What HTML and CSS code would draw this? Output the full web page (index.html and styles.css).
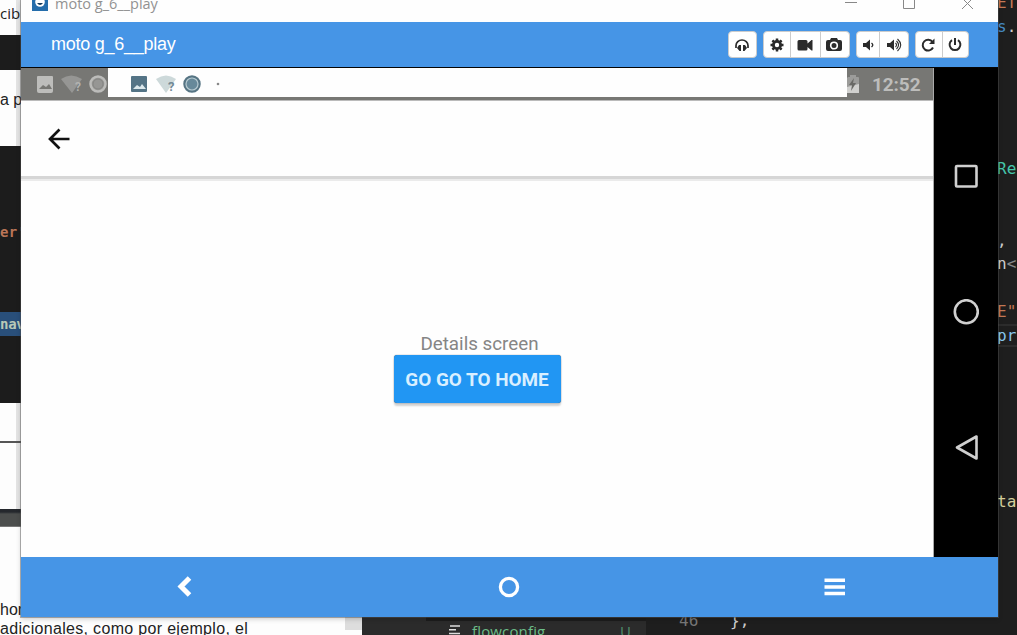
FILE: index.html
```html
<!DOCTYPE html>
<html lang="en">
<head>
<meta charset="utf-8">
<title>moto g_6__play</title>
<link rel="stylesheet" href="styles.css">
</head>
<body>
<div class="desktop">
  <div class="document">
    <div class="doc-row intro">cib</div>
    <div class="doc-code strip"></div>
    <div class="doc-row para">a p</div>
    <div class="doc-code block"><span class="code-str">er'</span><span class="code-sel">nav</span></div>
    <div class="doc-row gap-one"></div>
    <div class="doc-row gap-two"></div>
    <div class="picture-strip"></div>
    <div class="doc-row ending"><p>hor</p><p class="last-line">adicionales, como por ejemplo, el</p></div>
  </div>
  <div class="explorer">
    <div class="tree">
      <svg class="file-icon" viewBox="0 0 12 12"><path d="M1 2h10M0 5.7h7M0 9.5h11" stroke="#ddd" stroke-width="1.4"/></svg>
      <span class="file-name">flowconfig</span><span class="git-state">U</span>
    </div>
  </div>
  <div class="editor">
    <div class="line orange">ET</div>
    <div class="line"><span class="blue">s</span>.</div>
    <div class="line"></div><div class="line"></div><div class="line"></div><div class="line"></div><div class="line"></div>
    <div class="line teal">Re</div>
    <div class="line"></div><div class="line"></div>
    <div class="line">,</div>
    <div class="line">n<span class="muted">&lt;</span></div>
    <div class="line"></div>
    <div class="line orange">E"</div>
    <div class="line current">pr</div>
    <div class="line"></div><div class="line"></div><div class="line"></div><div class="line"></div><div class="line"></div><div class="line"></div>
    <div class="line yellow">ta</div>
    <div class="line"></div><div class="line"></div><div class="line"></div><div class="line"></div>
    <div class="line numbered"><span class="line-number">46</span><span>},</span></div>
  </div>

  <main class="window">
    <header class="titlebar">
      <svg class="app-icon" viewBox="0 0 16 12"><path fill="#256dab" d="M0 0h16v11H0z"/><circle cx="8" cy="2" r="4.8" fill="#fff"/><path fill="#163b5c" d="M5 3h6q-3 4-6 0z"/></svg>
      <span class="window-name">moto g_6__play</span>
      <svg class="window-controls" viewBox="0 0 132 12" fill="none" stroke="#888" stroke-width="1"><path d="M0 2.5h12M58.500-2h11v10.500h-11zM117-2l11 11M128-2l-11 11"/></svg>
    </header>
    <div class="toolbar">
      <h1 class="device-name">moto g_6__play</h1>
      <div class="actions">
        <div class="group audio"><button class="tool"><svg viewBox="0 0 16 16"><path d="M2 11V8.500a6 5.500 0 0 1 12 0V11" fill="none" stroke="#2b2b2b" stroke-width="1.700"/><path d="M5 8h2v6H5.500L3 11zM9 8h2l2 3-2.500 3H9z" fill="#2b2b2b"/></svg></button></div>
        <div class="group capture">
          <button class="tool"><svg viewBox="0 0 16 16"><circle cx="8" cy="8" r="3.600" fill="none" stroke="#2b2b2b" stroke-width="2.800"/><path d="M8 1.500v3M8 11.500v3M1.500 8h3M11.500 8h3M3.400 3.400l2 2M10.600 10.600l2 2M12.600 3.400l-2 2M5.400 10.600l-2 2" stroke="#2b2b2b" stroke-width="2.500"/></svg></button>
          <button class="tool"><svg viewBox="0 0 16 16"><path d="M2 3h7q1.500 0 1.500 1.500v2L14.500 3H15.500v10.500h-1L10.500 10v2q0 1.500-1.500 1.500H2Q.5 13.500.5 12V4.500Q.5 3 2 3z" fill="#2b2b2b"/></svg></button>
          <button class="tool"><svg viewBox="0 0 16 16"><path d="M0 5q0-2 2-2h2l1-2h6l1 2h2q2 0 2 2v7q0 2-2 2H2q-2 0-2-2z" fill="#2b2b2b"/><circle cx="8" cy="8.500" r="3.300" fill="none" stroke="#fff" stroke-width="1.600"/></svg></button>
        </div>
        <div class="group volume">
          <button class="tool"><svg viewBox="0 0 16 16"><path d="M3 6h3l4-3.500v11L6 10H3z" fill="#2b2b2b"/><path d="M11.500 6q2.500 2 0 4" fill="none" stroke="#2b2b2b" stroke-width="1.400"/></svg></button>
          <button class="tool"><svg viewBox="0 0 16 16"><path d="M1 6h3l4-3.500v11L4 10H1z" fill="#2b2b2b"/><path d="M9.500 6q2 2 0 4M10.500 4q4 4 0 8M11.500 2q6.500 6 0 12" fill="none" stroke="#2b2b2b" stroke-width="1.100"/></svg></button>
        </div>
        <div class="group power">
          <button class="tool"><svg viewBox="0 0 16 16"><path d="M12.500 5A5.400 5.400 0 1 0 13 10.500" fill="none" stroke="#2b2b2b" stroke-width="2"/><path d="M14.500 1.500v5.500H9z" fill="#2b2b2b"/></svg></button>
          <button class="tool"><svg viewBox="0 0 16 16"><path d="M5 3.200a5.400 5.400 0 1 0 6 0M8 1v7" fill="none" stroke="#2b2b2b" stroke-width="2"/></svg></button>
        </div>
      </div>
    </div>
    <div class="phone">
      <div class="screen">
        <div class="statusbar">
          <svg class="notices dim" viewBox="0 0 87 32"><path fill="#bdbdbb" d="M17 8h14q1 0 1 1v14q0 2-2 2H18q-2 0-2-2V9q0-1 1-1z"/><path fill="#777773" d="M18 21l4-4 3 2 3-3 3 5z"/><path fill="#969694" d="M40 11q10-7 21 0L51 25z"/><circle cx="77" cy="16" r="7.500" fill="#969694" stroke="#bcbcba" stroke-width="2.500"/><circle cx="77" cy="16" r="5" fill="none" stroke="#858583" stroke-width="1"/><text x="54" y="23" font-family="Roboto" font-size="12" font-weight="700" fill="#b2b2b0">?</text></svg>
          <div class="notification">
            <svg class="notices" viewBox="0 0 120 29"><path fill="#547486" d="M24 8h14q1 0 1 1v14q0 1-1 1H24q-1 0-1-1V9q0-1 1-1z"/><path fill="#dbe8ec" d="M25 21l4-4 3 2 2-3 4 5z"/><path fill="#cdd9da" d="M48 11q10-7 20 0L58 25z"/><text x="60" y="22.500" font-family="Roboto" font-size="13" font-weight="700" fill="#728995">?</text><circle cx="84" cy="16" r="7.600" fill="#67899a" stroke="#567483" stroke-width="2.300"/><circle cx="84" cy="16" r="6" fill="none" stroke="#b6c9d0" stroke-width="1.200"/><circle cx="110" cy="16" r="1.300" fill="#888"/></svg>
          </div>
          <svg class="battery" viewBox="0 0 13 32"><path fill="#9c9c9a" d="M1 9h2V7h6v2h2q1 0 1 1v15H0V10z"/><path fill="#d0d0ce" d="M0 19l12-3v9H0z"/><path fill="#696966" d="M7 10l-5 7h3l-1 6 5-8H6z"/></svg>
          <span class="clock">12:52</span>
        </div>
        <div class="appbar"><svg class="back-arrow" viewBox="0 0 24 24"><path d="M22.500 12H3M12.500 2.500L3 12l9.500 9.500" fill="none" stroke="#111" stroke-width="2.700"/></svg></div>
        <div class="details">
          <p class="screen-name">Details screen</p>
          <button class="home-button">GO GO TO HOME</button>
        </div>
      </div>
      <nav class="softkeys">
        <svg viewBox="0 0 26 26"><rect x="3" y="3" width="20.500" height="20.500" rx="1"/></svg>
        <svg viewBox="0 0 26 26"><circle cx="13.300" cy="12.700" r="11.500"/></svg>
        <svg viewBox="0 0 26 26"><path d="M23.500 1.500v22L4 12.500z" stroke-linejoin="round"/></svg>
      </nav>
    </div>
    <nav class="bottom-nav">
      <svg viewBox="0 0 24 24"><path d="M17.500 3L9 11.500l8.500 8.500" fill="none" stroke="#fff" stroke-width="5"/></svg>
      <svg viewBox="0 0 24 24"><circle cx="12" cy="12" r="8.600" fill="none" stroke="#fff" stroke-width="3.300"/></svg>
      <svg viewBox="0 0 24 24"><path d="M1.500 5.200h20.500M1.500 12h20.500M1.500 18.500h20.500" stroke="#fff" stroke-width="3.400"/></svg>
    </nav>
  </main>
</div>
</body>
</html>
```
FILE: styles.css
```css
* { box-sizing: border-box; }
body { margin: 0; }
p, h1 { margin: 0; }
svg { display: block; flex: none; }
button { margin: 0; border: 0; padding: 0; background: none; }
.desktop { position: relative; display: flex; width: 1017px; height: 635px; overflow: hidden; background: #1e1e1e; font-family: "Liberation Sans", Arial, sans-serif; }

.document { display: flex; flex-direction: column; width: 362px; flex: none; background: #fdfdfd; color: #222; }
.doc-row { flex: none; white-space: nowrap; background: linear-gradient(90deg, #fdfdfd 16px, #e4e4e4 16px); }
.intro { height: 35px; padding-top: 3px; font: 15px/20px "Open Sans", sans-serif; }
.doc-code { flex: none; background: #1c1c1c; }
.strip { height: 35px; }
.para { height: 76px; padding-top: 20px; font-size: 16px; line-height: 20px; }
.block { display: flex; flex-direction: column; height: 257px; padding-top: 76px; font: bold 14px/20px "DejaVu Sans Mono", monospace; letter-spacing: -.3px; }
.code-str { color: #b97557; letter-spacing: .3px; }
.code-sel { height: 24px; margin-top: 70px; line-height: 25px; color: #b9c9b7; background: #294f7a; }
.gap-one { height: 40px; border-bottom: 2px solid #555; }
.gap-two { height: 66px; }
.picture-strip { height: 18px; flex: none; background: linear-gradient(#25282d 3px, #4c4e4d 5px); border-bottom: 1px solid #777; }
.ending { height: 108px; padding-top: 73px; font-size: 16px; line-height: 19px; background: linear-gradient(90deg, transparent 345px, #ddd 345px) 0 0 / 100% 103px no-repeat, #fdfdfd; }
.last-line { letter-spacing: .32px; }

.explorer { width: 284px; flex: none; padding: 621px 0 0 64px; background: linear-gradient(90deg, #2b2b2b 64px, #1c1c1c 64px); }
.tree { display: flex; align-items: flex-start; width: 220px; height: 14px; padding-left: 23px; background: #2b2b2b; color: #6bbd88; font: 15px/20px "Open Sans", sans-serif; }
.file-icon { width: 12px; height: 12px; margin: 3px 11px 0 0; }
.file-name { flex: 1; letter-spacing: .15px; }
.git-state { width: 26px; color: #508d6b; }

.editor { width: 371px; flex: none; margin-top: -9px; color: #ccc; font: 16px/24.75px "DejaVu Sans Mono", monospace; }
.line { height: 23.75px; padding-left: 351px; white-space: nowrap; }
.orange { color: #c47855; } .blue { color: #458bc5; } .teal { color: #45c6aa; } .yellow { color: #d5cf9c; } .muted { color: #888; }
.current { color: #88c8ef; border-block: 2px solid #2c2c2c; line-height: 20px; }
.numbered { display: flex; padding-left: 33px; }
.line-number { width: 51px; color: #777; }

.window { position: absolute; left: 21px; top: 0; display: flex; flex-direction: column; width: 977px; height: 617px; box-shadow: 0 0 0 1px rgba(85, 85, 85, .45), 0 2px 5px rgba(0, 0, 0, .2); }
.titlebar { display: flex; align-items: flex-start; height: 22px; padding: 0 21px 0 11px; background: #fefefe; overflow: hidden; }
.app-icon { width: 16px; height: 12px; }
.window-name { flex: 1; margin: -6px 0 0 7px; color: #929292; font: 14.5px/20px "Open Sans", sans-serif; }
.window-controls { width: 132px; height: 12px; }
.toolbar { display: flex; align-items: center; justify-content: space-between; height: 46px; padding: 0 29px 0 30px; background: #4695e6; border-bottom: 1px solid #050505; }
.device-name { color: #fff; font-size: 18px; font-weight: 400; letter-spacing: -.25px; }
.actions { display: flex; gap: 6px; }
.group { display: flex; height: 27px; border: 1px solid #ccc; border-radius: 4px; background: #fff; overflow: hidden; }
.tool { display: flex; flex: 1; align-items: center; justify-content: center; }
.tool + .tool { border-left: 1px solid #ccc; }
.tool svg { width: 16px; height: 16px; margin-left: -1px; }
.audio { width: 29px; } .capture { width: 87px; } .volume { width: 53px; } .power { width: 54px; }
.capture .tool:first-child { flex: none; width: 26px; }
.volume .tool:first-child { flex: none; width: 22px; }

.phone { display: flex; height: 489px; background: #000; }
.screen { display: flex; flex-direction: column; width: 913px; background: #fefefe; border-right: 1px solid #aaa; }
.statusbar { display: flex; height: 33px; background: #777774; border-bottom: 1px solid #bbb; }
.notices.dim { width: 87px; height: 32px; }
.notification { width: 739px; height: 29px; background: #fefefe; }
.notification .notices { width: 120px; height: 29px; }
.battery { width: 13px; height: 32px; }
.clock { margin-left: 12px; color: #bdbdbb; font: bold 19px/34px Roboto, sans-serif; letter-spacing: -.1px; }
.appbar { display: flex; align-items: center; height: 78px; padding: 1px 26px 0; border-bottom: 3px solid #d6d6d6; box-shadow: 0 2px #ebebeb; }
.back-arrow { width: 24px; height: 24px; }
.details { display: flex; flex-direction: column; align-items: center; padding-top: 154px; }
.screen-name { color: #858585; font: 18.8px/22px Roboto, sans-serif; margin-left: 5px; }
.home-button { width: 167px; height: 48px; border-radius: 3px; background: #2196f3; color: #d9efff; font: bold 18.9px/50px Roboto, sans-serif; box-shadow: 0 3px 2px rgba(0, 0, 0, .18), 0 0 1px #345; white-space: nowrap; }
.softkeys { display: flex; flex-direction: column; align-items: center; gap: 110px; width: 64px; padding-top: 95px; }
.softkeys svg { width: 26px; height: 26px; fill: none; stroke: #d0d0d0; stroke-width: 2.6; }
.bottom-nav { display: grid; grid-template-columns: repeat(3, 1fr); align-items: center; justify-items: center; height: 60px; background: #4695e6; }
.bottom-nav svg { width: 24px; height: 24px; }
```
